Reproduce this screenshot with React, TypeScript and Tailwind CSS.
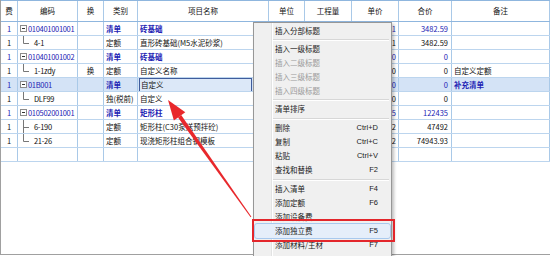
import React from 'react';

type Row = {
  code: string;
  tree: 'box' | 'last' | 'mid' | 'none';
  swap?: string;
  kind: string;
  name: string;
  price: string;
  total: string;
  note?: string;
  bill?: boolean;
  selected?: boolean;
  edit?: boolean;
};

// 单价 column is covered by the menu, only its last digit shows
const rows: Row[] = [
  { code: '010401001001', tree: 'box', kind: '清单', name: '砖基础', price: '1', total: '3482.59', bill: true },
  { code: '4-1', tree: 'last', kind: '定额', name: '直形砖基础(M5水泥砂浆)', price: '1', total: '3482.59' },
  { code: '010401001002', tree: 'box', kind: '清单', name: '砖基础', price: '0', total: '0', bill: true },
  { code: '1-1zdy', tree: 'last', swap: '换', kind: '定额', name: '自定义名称', price: '0', total: '0', note: '自定义定额' },
  { code: '01B001', tree: 'box', kind: '清单', name: '自定义', price: '0', total: '0', note: '补充清单', bill: true, selected: true, edit: true },
  { code: 'DLF99', tree: 'last', kind: '独(税前)', name: '自定义', price: '0', total: '0' },
  { code: '010502001001', tree: 'box', kind: '清单', name: '矩形柱', price: '5', total: '122435', bill: true },
  { code: '6-190', tree: 'mid', kind: '定额', name: '矩形柱(C30泵送预拌砼)', price: '2', total: '47492' },
  { code: '21-26', tree: 'last', kind: '定额', name: '现浇矩形柱组合钢模板', price: '2', total: '74943.93' },
];

const grid = 'grid grid-cols-[17px_60px_26px_34px_131px_36px_47px_47px_53px_1fr]';
const cell = 'border-r border-[#a9c9e8] flex items-center overflow-hidden whitespace-nowrap';

const TreeMark = ({ tree }: { tree: Row['tree'] }) => {
  if (tree === 'box')
    return (
      <svg width="7" height="14" viewBox="0 0 7 14" className="shrink-0">
        <rect x="0.5" y="3.5" width="6" height="6" fill="#fff" stroke="#8c8c8c" />
        <line x1="2" y1="6.5" x2="5" y2="6.5" stroke="#333" />
      </svg>
    );
  if (tree === 'none') return null;
  return (
    <svg width="14" height="14" viewBox="0 0 14 14" className="shrink-0">
      <line x1="3.5" y1="0" x2="3.5" y2={tree === 'mid' ? 14 : 7.5} stroke="#777" />
      <line x1="3.5" y1="7.5" x2="9" y2="7.5" stroke="#777" />
    </svg>
  );
};

type MenuEntry = { label: string; key?: string; disabled?: boolean; active?: boolean } | { sep: number };

const menu: MenuEntry[] = [
  { label: '插入分部标题' },
  { sep: 4 },
  { label: '插入一级标题' },
  { label: '插入二级标题', disabled: true },
  { label: '插入三级标题', disabled: true },
  { label: '插入四级标题', disabled: true },
  { sep: 4 },
  { label: '清单排序' },
  { sep: 5 },
  { label: '删除', key: 'Ctrl+D' },
  { label: '复制', key: 'Ctrl+C' },
  { label: '粘贴', key: 'Ctrl+V' },
  { label: '查找和替换', key: 'F2' },
  { sep: 5 },
  { label: '插入清单', key: 'F4' },
  { label: '添加定额', key: 'F6' },
  { label: '添加设备费' },
  { label: '添加独立费', key: 'F5', active: true },
  { label: '添加材料/主材', key: 'F7' },
];

const ContextMenu = () => (
  <div className="absolute left-[253px] top-[22px] w-[139px] h-[240px] bg-[#f0f0f0] border border-[#979797] shadow-[2px_2px_3px_rgba(0,0,0,0.25)] pt-[1px] text-[7.5px] text-[#1a1a1a]">
    <div className="absolute left-[17px] top-0 bottom-0 border-l border-[#e2e3e3] border-r-white border-r w-[2px]" />
    {menu.map((m, i) =>
      'sep' in m ? (
        <div key={i} className="flex items-center ml-[19px] mr-[2px]" style={{ height: m.sep }}>
          <div className="w-full border-t border-[#d7d7d7] border-b border-b-white" />
        </div>
      ) : (
        <div
          key={i}
          className={`relative flex items-center justify-between h-[14px] pl-[20px] pr-[12px] mx-[1px] ${
            m.active ? 'bg-[#e5eefa] outline outline-[#a8c9ee] rounded-[2px]' : ''
          } ${m.disabled ? 'text-[#9a9a9a]' : ''}`}
        >
          <span>{m.label}</span>
          {m.key && <span className="font-['Liberation_Sans',sans-serif] text-[7.5px]">{m.key}</span>}
        </div>
      )
    )}
    <div className="absolute left-[-2px] top-[196px] w-[143px] h-[23px] border-2 border-[#e3262b]" />
  </div>
);

const Arrow = () => (
  <svg className="absolute left-0 top-0 pointer-events-none" width="550" height="256" viewBox="0 0 550 256">
    <polygon points="181.2,115.1 178,117.5 250.6,217.3 251.4,216.7" fill="#e8282c" />
    <polygon points="168,100 185.3,112.2 173.9,120.4" fill="#e8282c" />
  </svg>
);

export default function App() {
  return (
    <div className="relative w-[550px] h-[256px] bg-white overflow-hidden font-['Noto_Sans_CJK_SC','Liberation_Sans',sans-serif] text-[7.5px] text-[#111]">
      <div className="h-[255px] border-l border-b border-[#a0a0a0]">
        <div className={`${grid} h-[22px] border-t border-b border-[#8fb6de] text-[7.5px]`}>
          {['费', '编码', '换', '类别', '项目名称', '单位', '工程量', '单价', '合价', '备注'].map((h) => (
            <div key={h} className={`${cell} justify-center`}>
              {h}
            </div>
          ))}
        </div>
        {rows.map((r, i) => {
          const blue = r.bill ? 'text-[#2222b4]' : '';
          return (
            <div key={i} className={`${grid} h-[14px] border-b border-[#bcd5ee] ${r.selected ? 'bg-[#d4e3f6]' : ''}`}>
              <div className={`${cell} justify-center ${blue}`}>1</div>
              <div className={`${cell} pl-[2px] tracking-[-0.3px] ${blue}`}>
                <TreeMark tree={r.tree} />
                <span className={r.tree === 'box' ? 'ml-[1px]' : ''}>{r.code}</span>
              </div>
              <div className={`${cell} justify-center`}>{r.swap}</div>
              <div className={`${cell} pl-[2px] ${r.bill ? 'font-bold text-[#2222b4]' : ''}`}>{r.kind}</div>
              <div className={`${cell} pl-[1px]`}>
                {r.edit ? (
                  <div className="w-[113px] h-[14px] border border-[#3f5c9c] bg-[#dce8f8] flex items-center pl-[1px]">{r.name}</div>
                ) : (
                  <span className={`pl-[1px] ${r.bill ? 'font-bold text-[#2222b4]' : ''}`}>{r.name}</span>
                )}
              </div>
              <div className={cell} />
              <div className={cell} />
              <div className={`${cell} justify-end pr-[2px] ${blue}`}>{r.price}</div>
              <div className={`${cell} justify-end pr-[3px] ${blue}`}>{r.total}</div>
              <div className={`${cell} pl-[2px] ${r.bill ? 'font-bold text-[#2222b4]' : ''}`}>{r.note}</div>
            </div>
          );
        })}
        <div className={`${grid} h-[14px] border-b border-[#bcd5ee]`}>
          {Array.from({ length: 10 }).map((_, i) => (
            <div key={i} className={cell} />
          ))}
        </div>
      </div>
      <ContextMenu />
      <Arrow />
    </div>
  );
}
